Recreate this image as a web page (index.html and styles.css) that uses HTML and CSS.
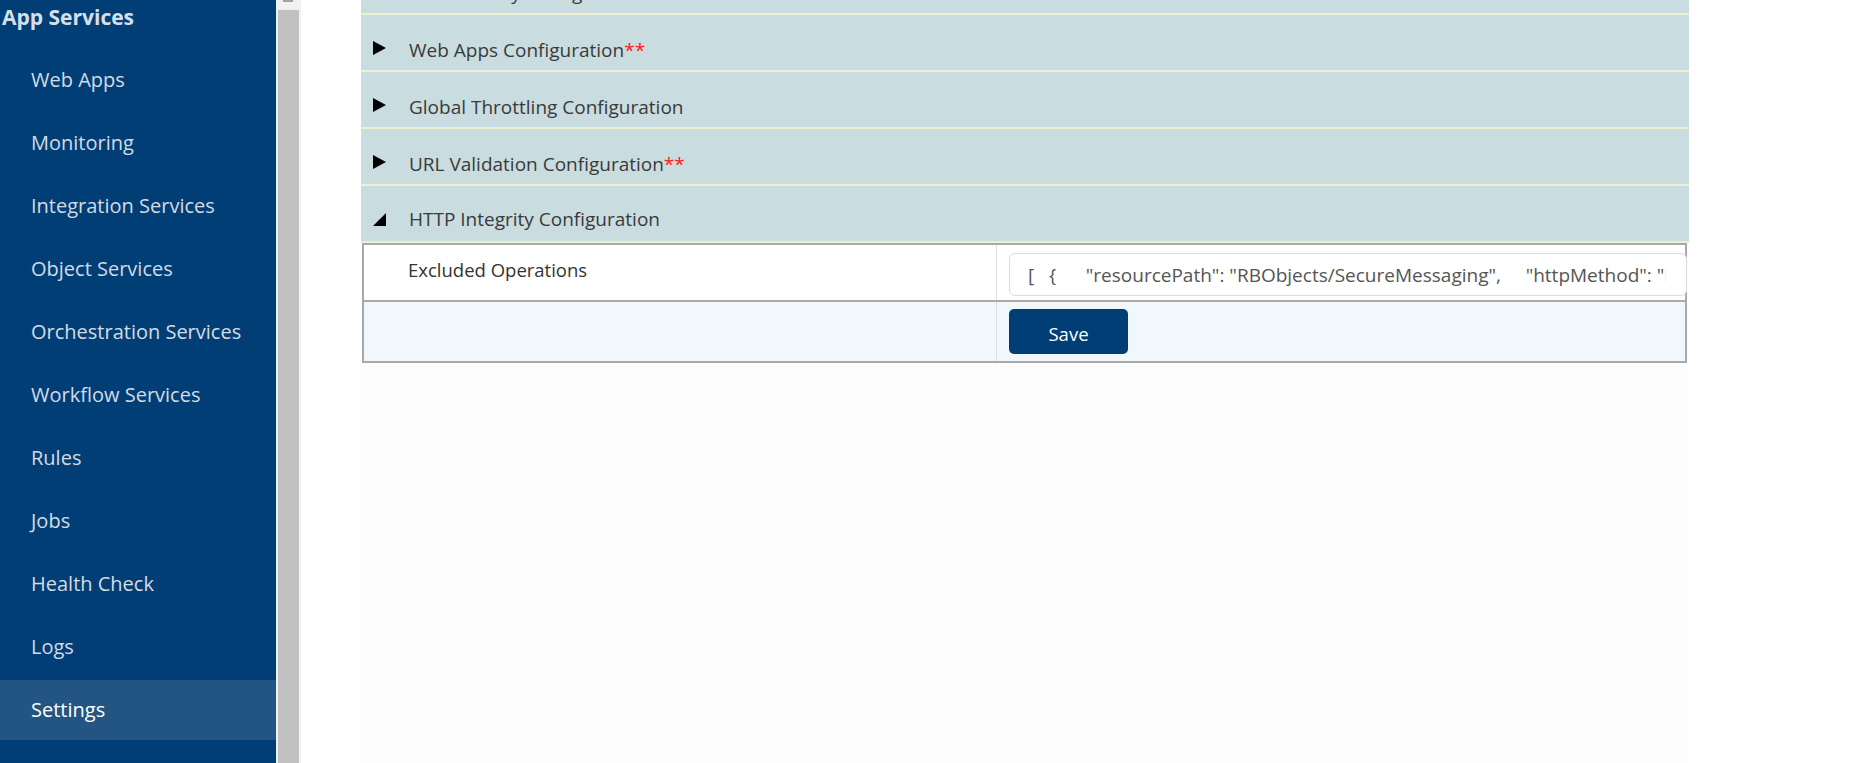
FILE: index.html
```html
<!DOCTYPE html>
<html lang="en">
<head>
    <meta charset="UTF-8">
    <meta name="viewport" content="width=device-width, initial-scale=1.0">
    <title>Settings - App Services</title>
    <link rel="stylesheet" href="styles.css">
</head>
<body>
    <!-- Left navigation -->
    <div class="sidebar">
        <div class="nav-title">App Services</div>
        <div class="nav-item">Web Apps</div>
        <div class="nav-item">Monitoring</div>
        <div class="nav-item">Integration Services</div>
        <div class="nav-item">Object Services</div>
        <div class="nav-item">Orchestration Services</div>
        <div class="nav-item">Workflow Services</div>
        <div class="nav-item">Rules</div>
        <div class="nav-item">Jobs</div>
        <div class="nav-item">Health Check</div>
        <div class="nav-item">Logs</div>
        <div class="nav-item active">Settings</div>
    </div>

    <!-- Sidebar scrollbar -->
    <div class="scroll-track">
        <div class="scroll-arrow"></div>
        <div class="scroll-thumb"></div>
    </div>

    <div class="main">
        <div class="panel">
            <div class="section-head first">
                <svg class="arrow" width="13" height="14" viewBox="0 0 13 14"><polygon points="0,0 13,7 0,14"/></svg>
                <span>Server Proxy Configuration</span>
            </div>
            <div class="section-head">
                <svg class="arrow" width="13" height="14" viewBox="0 0 13 14"><polygon points="0,0 13,7 0,14"/></svg>
                <span>Web Apps Configuration<span class="req">**</span></span>
            </div>
            <div class="section-head">
                <svg class="arrow" width="13" height="14" viewBox="0 0 13 14"><polygon points="0,0 13,7 0,14"/></svg>
                <span>Global Throttling Configuration</span>
            </div>
            <div class="section-head">
                <svg class="arrow" width="13" height="14" viewBox="0 0 13 14"><polygon points="0,0 13,7 0,14"/></svg>
                <span>URL Validation Configuration<span class="req">**</span></span>
            </div>
            <div class="section-head open">
                <svg class="arrow" width="13" height="14" viewBox="0 0 13 14"><polygon points="13,0 13,13 0,13"/></svg>
                <span>HTTP Integrity Configuration</span>
            </div>

            <!-- Expanded section body -->
            <div class="settings-table">
                <div class="settings-row">
                    <div class="label-cell"><span class="label">Excluded Operations</span></div>
                    <div class="value-cell">
                        <input class="json-input" type="text" value='[   {      "resourcePath": "RBObjects/SecureMessaging",     "httpMethod": "POST"  }]'>
                    </div>
                </div>
                <div class="settings-row actions">
                    <div class="label-cell"></div>
                    <div class="value-cell">
                        <button class="save-btn">Save</button>
                    </div>
                </div>
            </div>
        </div>
    </div>
</body>
</html>
```

FILE: styles.css
```css
html, body {
    height: 100%;
}

body {
    margin: 0;
    display: flex;
    font-family: "Open Sans", "Noto Sans", sans-serif;
    background: #ffffff;
    overflow: hidden;
}

/* Left navigation */
.sidebar {
    width: 276px;
    flex-shrink: 0;
    background-color: #013e75;
    display: flex;
    flex-direction: column;
}

.nav-title {
    height: 47px;
    padding: 3px 0 0 2px;
    font-size: 21px;
    font-weight: bold;
    color: #d6e0ea;
    line-height: 29px;
}

.nav-item {
    height: 60px;
    line-height: 60px;
    margin-bottom: 3px;
    padding-left: 31px;
    font-size: 20px;
    color: #d3dbe5;
}

.nav-item.active {
    background-color: #225581;
    color: #ffffff;
}

.scroll-track {
    width: 25px;
    flex-shrink: 0;
    background-color: #f1f1f1;
    display: flex;
    flex-direction: column;
    align-items: flex-start;
}

.scroll-arrow {
    width: 10px;
    height: 2px;
    margin: 0 0 8px 7px;
    background-color: #a3a3a3;
}

.scroll-thumb {
    width: 21px;
    margin-left: 2px;
    flex: 1;
    background-color: #c1c1c1;
}

/* Main content */
.main {
    flex: 1;
    padding-left: 60px;
    display: flex;
}

.panel {
    width: 1328px;
    background-color: #fdfdfd;
}

.section-head {
    height: 57px;
    box-sizing: border-box;
    padding: 14px 0 0 12px;
    display: flex;
    align-items: center;
    gap: 23px;
    background-color: #c9dcdf;
    border-bottom: 2px solid #eef0d2;
    font-size: 19px;
    color: #3a3a3a;
}

.section-head.first {
    margin-top: -42px;
}

.section-head.open {
    padding-top: 10px;
}

.arrow {
    flex-shrink: 0;
    margin-top: -4px;
}

.section-head.open .arrow {
    margin-top: 2px;
}

.arrow polygon {
    fill: #000000;
}

.req {
    color: #ff1a1a;
}

.settings-table {
    margin: 0 2px 0 1px;
    border: 2px solid #a9a9a9;
}

.settings-row {
    display: flex;
    height: 55px;
    background-color: #ffffff;
    border-bottom: 2px solid #a9a9a9;
}

.settings-row.actions {
    height: 59px;
    border-bottom: none;
    background-color: #f0f7fd;
}

.label-cell {
    width: 633px;
    flex-shrink: 0;
    border-right: 1px solid #dddddd;
    display: flex;
    align-items: center;
    padding-left: 44px;
    box-sizing: border-box;
}

.label {
    font-size: 18.5px;
    color: #333333;
    padding-bottom: 6px;
}

.value-cell {
    flex: 1;
    display: flex;
    align-items: center;
    padding-left: 12px;
}

.json-input {
    width: 678px;
    height: 43px;
    box-sizing: border-box;
    margin-top: 4px;
    padding: 0 20px 0 18px;
    border: 1.5px solid #dcdcdc;
    border-radius: 6px;
    background: #ffffff;
    font-family: "Open Sans", "Noto Sans", sans-serif;
    font-size: 19px;
    color: #555555;
    outline: none;
}

.save-btn {
    width: 119px;
    height: 45px;
    padding-top: 5px;
    border: none;
    border-radius: 5px;
    background-color: #013e75;
    color: #ffffff;
    font-family: "Open Sans", "Noto Sans", sans-serif;
    font-size: 18.5px;
    cursor: pointer;
}
```
